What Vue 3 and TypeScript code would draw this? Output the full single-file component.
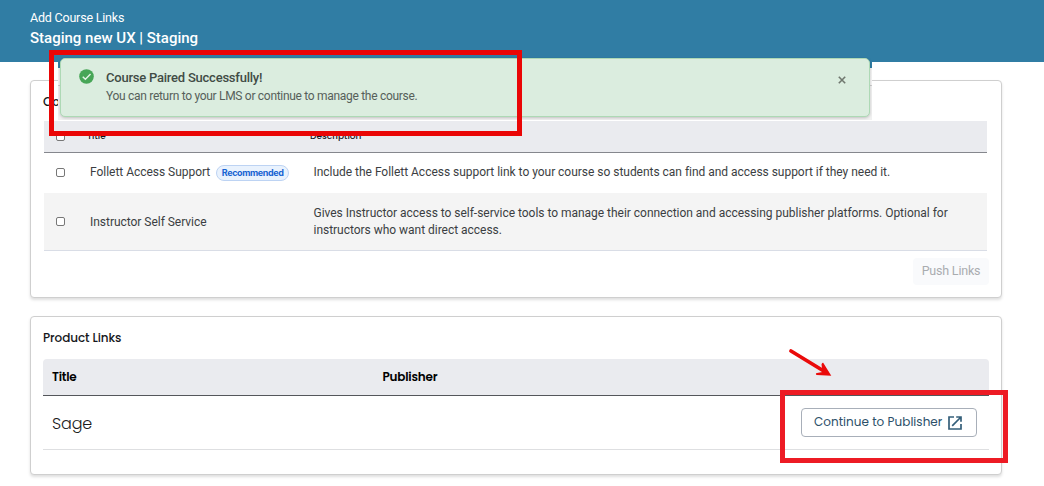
<script setup lang="ts">
interface CourseLink {
  title: string
  badge?: string
  lines: string[]
}

const courseLinks: CourseLink[] = [
  {
    title: 'Follett Access Support',
    badge: 'Recommended',
    lines: ['Include the Follett Access support link to your course so students can find and access support if they need it.'],
  },
  {
    title: 'Instructor Self Service',
    lines: [
      'Gives Instructor access to self-service tools to manage their connection and accessing publisher platforms. Optional for',
      'instructors who want direct access.',
    ],
  },
]

const products: string[] = ['Sage']
</script>

<template>
  <div class="page">
    <header class="topbar">
      <div class="crumb">Add Course Links</div>
      <div class="course">Staging new UX | Staging</div>
    </header>

    <main class="content">
      <section class="card course-card">
        <h2 class="card-title">Co</h2>
        <div class="table">
          <div class="row head">
            <span class="box"></span>
            <span class="head-title">Title</span>
            <span class="head-desc">Description</span>
          </div>
          <div v-for="(link, i) in courseLinks" :key="link.title" class="row" :class="i ? 'striped' : 'plain'">
            <span class="box"></span>
            <div class="name">
              <span class="name-label">{{ link.title }}</span>
              <span v-if="link.badge" class="badge">{{ link.badge }}</span>
            </div>
            <div class="desc">
              <div v-for="line in link.lines" :key="line">{{ line }}</div>
            </div>
          </div>
        </div>
        <button class="push" type="button" disabled>Push Links</button>
      </section>

      <section class="card product-card">
        <h2 class="card-title">Product Links</h2>
        <div class="products">
          <div class="product-head">
            <span class="col-title">Title</span>
            <span class="col-publisher">Publisher</span>
          </div>
          <div v-for="name in products" :key="name" class="product-row">
            <span class="product-name">{{ name }}</span>
            <button class="continue" type="button">
              <span class="continue-label">Continue to Publisher</span>
              <svg class="open" viewBox="0 0 14 14" width="14" height="14">
                <path d="M6 1H1V13H13V8M8.2 1H13V5.8M13 1L4.2 9.8" fill="none" stroke="currentColor" stroke-width="1.7" />
              </svg>
            </button>
          </div>
        </div>
      </section>
    </main>

    <div class="toast-layer">
      <div class="toast">
        <svg class="check" viewBox="0 0 16 16" width="15" height="15">
          <circle cx="8" cy="8" r="7.8" fill="#47a657" />
          <path d="M4 8.2L6.8 11L12.3 5.4" fill="none" stroke="#e4f3e6" stroke-width="1.5" />
        </svg>
        <div class="toast-text">
          <div class="toast-title">Course Paired Successfully!</div>
          <div class="toast-body">You can return to your LMS or continue to manage the course.</div>
        </div>
        <svg class="close" viewBox="0 0 8 8" width="8" height="8">
          <path d="M0.8 0.8L7.2 7.2M7.2 0.8L0.8 7.2" stroke="#70786f" stroke-width="1.6" />
        </svg>
      </div>
    </div>

    <div class="mark mark-toast"></div>
    <div class="mark mark-button"></div>
    <svg class="arrow" viewBox="0 0 46 32" width="46" height="32">
      <path d="M4 4L40 26" stroke="#ea0a0a" stroke-width="3.8" stroke-linecap="round" />
      <path d="M36.2 15.8L44.3 28.8L29.5 28Q28 26.5 30 26L35.5 25L34.5 17.5Q35 15.3 36.2 15.8Z" fill="#ea0a0a" />
    </svg>
  </div>
</template>

<style>
body {
  background: #fff;
}
</style>

<style scoped>
* {
  box-sizing: border-box;
}
.page {
  position: relative;
  width: 1044px;
  height: 486px;
  overflow: hidden;
  background: #fff;
  font-family: Roboto, "Liberation Sans", sans-serif;
  color: #3b3e42;
  white-space: nowrap;
}
.topbar {
  height: 62px;
  padding: 9px 30px 0;
  background: #307da4;
  color: #fff;
}
.crumb {
  font-size: 12.5px;
  line-height: 18px;
  letter-spacing: -0.2px;
}
.course {
  font-size: 15px;
  font-weight: 500;
  line-height: 22px;
}
.content {
  width: 972px;
  margin: 18px 0 0 30px;
  display: flex;
  flex-direction: column;
  gap: 18px;
}
.card {
  border: 1px solid #cfcfcf;
  border-radius: 4px;
  background: #fff;
  box-shadow: 0 2px 3px rgba(0, 0, 0, 0.13);
}
.card-title {
  margin: 0;
  font-family: Poppins, Inter, sans-serif;
  font-size: 12px;
  font-weight: 500;
  line-height: 18px;
  letter-spacing: -0.08px;
  color: #15171b;
}
.course-card {
  height: 218px;
  padding: 12px 14px 0 13px;
  display: flex;
  flex-direction: column;
}
.course-card .card-title {
  padding-bottom: 10px;
  margin-left: -1px;
}
.row {
  display: flex;
  align-items: center;
  font-size: 12px;
}
.box {
  width: 9px;
  height: 9px;
  margin-left: 12px;
  flex: none;
  border: 1px solid #777;
  border-radius: 2px;
  background: #fff;
}
.head {
  height: 32px;
  background: #eaebef;
  border-bottom: 1px solid #85878d;
  font-family: Poppins, Inter, sans-serif;
  font-size: 9px;
  font-weight: 500;
  color: #15171b;
}
.head-title {
  width: 223px;
  margin-left: 22px;
}
.head .box {
  margin-top: -1px;
}
.plain {
  height: 40px;
  padding-bottom: 1px;
}
.plain .box {
  margin-top: -1px;
}
.striped {
  height: 58px;
  background: #f4f4f4;
  border-bottom: 1px solid #d9dde6;
}
.name {
  width: 223.5px;
  margin-left: 25px;
  display: flex;
  align-items: center;
  gap: 6px;
  letter-spacing: -0.03px;
}
.plain .name-label {
  padding-bottom: 1px;
}
.desc {
  line-height: 17px;
  letter-spacing: -0.025px;
}
.badge {
  width: 73px;
  height: 16px;
  border: 1px solid #bdd3f3;
  border-radius: 8px;
  background: #e9f2fd;
  color: #1763d2;
  font-family: Inter, sans-serif;
  font-size: 9px;
  font-weight: 700;
  letter-spacing: -0.4px;
  line-height: 14px;
  text-align: center;
}
.push {
  align-self: flex-end;
  width: 76px;
  height: 27px;
  margin: 7px -2px 0 0;
  padding: 0 0 2px;
  border: 0;
  border-radius: 4px;
  background: #f9fafc;
  color: #a9acb0;
  font: 400 12.5px/25px Roboto, sans-serif;
  letter-spacing: -0.2px;
}
.product-card {
  height: 159px;
  padding: 12px 12px 0;
}
.products {
  margin-top: 12px;
}
.product-head {
  height: 37px;
  padding-left: 9px;
  display: flex;
  align-items: center;
  background: #eaebef;
  border-bottom: 1px solid #54565b;
  border-radius: 4px 4px 0 0;
  font-family: Poppins, Inter, sans-serif;
  font-size: 12px;
  font-weight: 600;
  letter-spacing: -0.22px;
  color: #000;
}
.col-title {
  width: 330.5px;
}
.product-row {
  height: 54px;
  padding: 0 12px 0 9px;
  display: flex;
  align-items: center;
  justify-content: space-between;
  border-bottom: 1px solid #dedfe1;
}
.product-name {
  padding-top: 2px;
  font-family: Poppins, "Century Gothic", sans-serif;
  font-size: 16px;
  font-weight: 300;
  letter-spacing: -0.15px;
  color: #1c1c1c;
}
.continue {
  width: 176px;
  height: 29px;
  padding: 0 14px 0 12px;
  display: flex;
  align-items: center;
  justify-content: space-between;
  border: 1px solid #a8afb9;
  border-radius: 4px;
  background: #fff;
  color: #2c5069;
  font-family: Poppins, Inter, sans-serif;
  font-size: 12px;
}
.continue-label {
  padding-bottom: 1px;
  letter-spacing: 0.03px;
}
.open {
  color: #345f7a;
}
.toast-layer {
  position: absolute;
  left: 58px;
  top: 57px;
  width: 814px;
  height: 63px;
  padding: 1px 2px 0;
  overflow: hidden;
  background: linear-gradient(#307da4 11px, #f3f3f3 11px, #f6f6f6 28px, #cccccc 28px, #cccccc 29px, #f1f1f1 29px);
}
.toast {
  height: 59px;
  padding: 0 23px 0 18px;
  display: flex;
  align-items: flex-start;
  border: 1px solid #add9b5;
  border-radius: 5px;
  background: #dbeddf;
  box-shadow: 0 1px 3px rgba(0, 0, 0, 0.2);
}
.check {
  margin-top: 10px;
}
.toast-text {
  margin: 10px auto 0 12px;
}
.toast-title {
  font-size: 13px;
  font-weight: 500;
  line-height: 18px;
  letter-spacing: -0.23px;
  color: #414b45;
}
.toast-body {
  font-size: 12px;
  line-height: 18px;
  letter-spacing: -0.3px;
  color: #56605a;
}
.close {
  margin-top: 17px;
}
.mark {
  position: absolute;
}
.mark-toast {
  left: 49px;
  top: 50px;
  width: 473px;
  height: 86px;
  border: 5px solid #ea0606;
}
.mark-button {
  left: 780px;
  top: 390px;
  width: 228px;
  height: 73px;
  border: 5px solid #ed1b24;
}
.arrow {
  position: absolute;
  left: 787px;
  top: 347px;
}
</style>
